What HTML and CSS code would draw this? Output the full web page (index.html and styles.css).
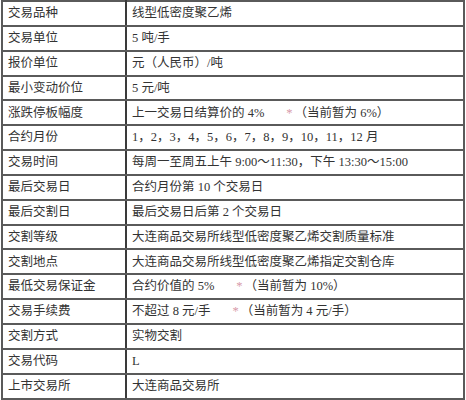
FILE: index.html
```html
<!DOCTYPE html>
<html lang="zh-CN">
<head>
<meta charset="utf-8">
<title>线型低密度聚乙烯期货合约</title>
<link rel="stylesheet" href="styles.css">
</head>
<body>
<table class="spec">
  <tbody>
    <tr><td class="k">交易品种</td><td class="v">线型低密度聚乙烯</td></tr>
    <tr><td class="k">交易单位</td><td class="v">5 吨/手</td></tr>
    <tr><td class="k">报价单位</td><td class="v">元（人民币）/吨</td></tr>
    <tr><td class="k">最小变动价位</td><td class="v">5 元/吨</td></tr>
    <tr><td class="k">涨跌停板幅度</td><td class="v">上一交易日结算价的 4%<span class="star">*</span>（当前暂为 6%）</td></tr>
    <tr><td class="k">合约月份</td><td class="v">1，2，3，4，5，6，7，8，9，10，11，12 月</td></tr>
    <tr><td class="k">交易时间</td><td class="v">每周一至周五上午 9:00～11:30，下午 13:30～15:00</td></tr>
    <tr><td class="k">最后交易日</td><td class="v">合约月份第 10 个交易日</td></tr>
    <tr><td class="k">最后交割日</td><td class="v">最后交易日后第 2 个交易日</td></tr>
    <tr><td class="k">交割等级</td><td class="v">大连商品交易所线型低密度聚乙烯交割质量标准</td></tr>
    <tr><td class="k">交割地点</td><td class="v">大连商品交易所线型低密度聚乙烯指定交割仓库</td></tr>
    <tr><td class="k">最低交易保证金</td><td class="v">合约价值的 5%<span class="star">*</span>（当前暂为 10%）</td></tr>
    <tr><td class="k">交易手续费</td><td class="v">不超过 8 元/手<span class="star">*</span>（当前暂为 4 元/手）</td></tr>
    <tr><td class="k">交割方式</td><td class="v">实物交割</td></tr>
    <tr><td class="k">交易代码</td><td class="v">L</td></tr>
    <tr><td class="k">上市交易所</td><td class="v">大连商品交易所</td></tr>
  </tbody>
</table>
</body>
</html>
```
FILE: styles.css
```css
html, body {
  margin: 0;
  padding: 0;
  background: #ffffff;
}

.spec {
  margin-left: 1px;
  width: 464px;
  border-collapse: collapse;
  border: 2px solid #2e2e2e;
  font-family: "Liberation Serif", "Noto Sans CJK SC", serif;
  font-size: 12.5px;
  color: #333333;
  table-layout: fixed;
}

.spec td {
  height: 22.85px;
  padding: 0 0 0 5px;
  border: 2px solid #5a5a5a;
  vertical-align: middle;
  white-space: nowrap;
  line-height: 1;
}

.spec td.k {
  width: 117px;
  border-right-color: #3a3a3a;
}

.star {
  color: #d79aa8;
  margin: 0 2px 0 22px;
}
```
